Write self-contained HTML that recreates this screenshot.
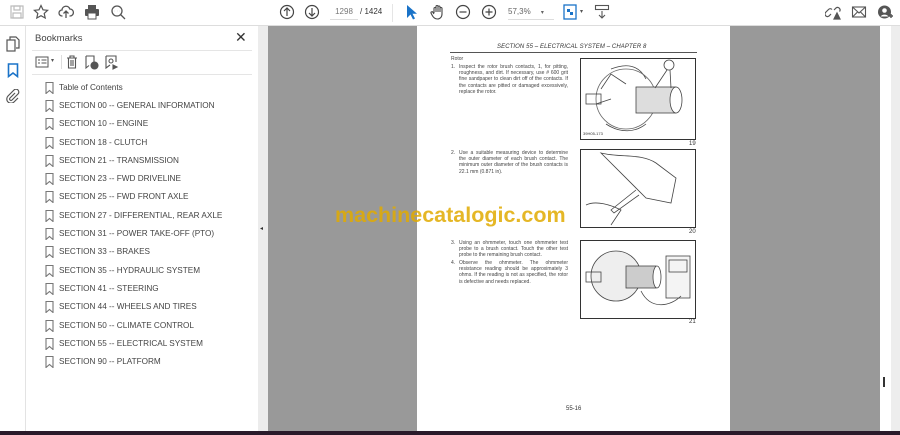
<!DOCTYPE html>
<html><head><meta charset="utf-8"><style>
*{margin:0;padding:0;box-sizing:border-box}
body{width:900px;height:435px;overflow:hidden;background:#fff;font-family:"Liberation Sans",sans-serif;position:relative}
.a{position:absolute}
.tb{left:0;top:0;width:900px;height:26px;background:#fff;border-bottom:1px solid #ddd}
.ic{position:absolute;top:4px}
.bm{position:absolute;left:45px;font-size:8.2px;color:#444;white-space:nowrap}
.bm svg{position:absolute;left:0;top:-1px}
.bm span{position:absolute;left:14px;top:0}
.pt{font-size:5px;color:#444;line-height:6.2px;position:absolute}
.box{position:absolute;border:1px solid #333;background:#fff;left:580px;width:116px}
.fn{position:absolute;font-size:6px;color:#333;left:689px}
</style></head><body>
<div class="a tb">
<svg class="ic" style="left:9px" width="16" height="16" viewBox="0 0 16 16" fill="none" stroke="#bbb" stroke-width="1.2"><rect x="2" y="2" width="12" height="12"/><rect x="5" y="2" width="6" height="4"/><rect x="4" y="9" width="8" height="5"/></svg>
<svg class="ic" style="left:33px" width="16" height="16" viewBox="0 0 16 16" fill="none" stroke="#555" stroke-width="1.2"><path d="M8 1.5l2 4.3 4.6.5-3.4 3.1 1 4.6L8 11.7 3.8 14l1-4.6L1.4 6.3 6 5.8z"/></svg>
<svg class="ic" style="left:58px" width="16" height="16" viewBox="0 0 16 16" fill="none" stroke="#555" stroke-width="1.3"><path d="M4.5 12H4a3 3 0 0 1 0-6 4 4 0 0 1 7.8-1A3 3 0 0 1 12 12h-.5M8 14V7M5.5 9.5 8 7l2.5 2.5"/></svg>
<svg class="ic" style="left:84px" width="16" height="16" viewBox="0 0 16 16" fill="#555"><rect x="4" y="1" width="8" height="4"/><rect x="1" y="5" width="14" height="7" rx="1"/><rect x="4" y="9" width="8" height="6" fill="#fff" stroke="#555"/></svg>
<svg class="ic" style="left:110px" width="16" height="16" viewBox="0 0 16 16" fill="none" stroke="#555" stroke-width="1.3"><circle cx="7" cy="7" r="5"/><path d="M10.5 10.5 15 15M4.5 7h.1M7 7h.1M9.5 7h.1"/></svg>
<svg class="ic" style="left:279px" width="16" height="16" viewBox="0 0 16 16" fill="none" stroke="#444" stroke-width="1.2"><circle cx="8" cy="8" r="6.5"/><path d="M8 12V4.5M5 7l3-3 3 3"/></svg>
<svg class="ic" style="left:304px" width="16" height="16" viewBox="0 0 16 16" fill="none" stroke="#444" stroke-width="1.2"><circle cx="8" cy="8" r="6.5"/><path d="M8 4v7.5M5 9l3 3 3-3"/></svg>
<div class="a" style="left:330px;top:7px;width:28px;font-size:8px;color:#777;border-bottom:1px solid #ddd;padding-bottom:3px;text-align:center">1298</div>
<div class="a" style="left:360px;top:7px;font-size:8px;color:#333">/ 1424</div>
<div class="a" style="left:392px;top:4px;width:1px;height:18px;background:#e5e5e5"></div>
<svg class="ic" style="left:405px" width="12" height="16" viewBox="0 0 12 16"><path d="M2 1v13l3.5-3.5 2.5 5 2-1-2.5-4.8H12z" fill="#1a73c8"/></svg>
<svg class="ic" style="left:430px" width="16" height="16" viewBox="0 0 16 16" fill="none" stroke="#444" stroke-width="1.1"><path d="M4 9V4.5a1 1 0 0 1 2 0V8M6 8V2.5a1 1 0 0 1 2 0V8M8 8V3a1 1 0 0 1 2 0v5M10 8V4.5a1 1 0 0 1 2 0V10c0 3-2 5-4.5 5S3.5 14 2 11l-1-2a1 1 0 0 1 2-.5L4 10"/></svg>
<svg class="ic" style="left:455px" width="16" height="16" viewBox="0 0 16 16" fill="none" stroke="#444" stroke-width="1.2"><circle cx="8" cy="8" r="6.5"/><path d="M4.5 8h7"/></svg>
<svg class="ic" style="left:481px" width="16" height="16" viewBox="0 0 16 16" fill="none" stroke="#444" stroke-width="1.2"><circle cx="8" cy="8" r="6.5"/><path d="M4.5 8h7M8 4.5v7"/></svg>
<div class="a" style="left:508px;top:7px;width:46px;font-size:8px;color:#666;border-bottom:1px solid #ddd;padding-bottom:3px">57,3% <span style="margin-left:8px;font-size:6px">▾</span></div>
<svg class="ic" style="left:563px" width="14" height="16" viewBox="0 0 14 16"><rect x="1" y="1" width="12" height="14" fill="#fff" stroke="#1a73c8" stroke-width="1.3"/><path d="M4 5h3v3H4zM7 8h3v3H7z" fill="#1a73c8"/></svg>
<div class="a" style="left:580px;top:8px;font-size:6px;color:#555">▾</div>
<svg class="ic" style="left:594px" width="16" height="16" viewBox="0 0 16 16" fill="none" stroke="#555" stroke-width="1.1"><rect x="1.5" y="1.5" width="13" height="4"/><path d="M8 7v7M5 11l3 3 3-3"/></svg>
<svg class="ic" style="left:825px" width="16" height="16" viewBox="0 0 16 16" fill="none" stroke="#555" stroke-width="1.2"><path d="M6 10l-2 2a2.5 2.5 0 0 1-3.5-3.5l3-3a2.5 2.5 0 0 1 3.5 0M9 6l2-2a2.5 2.5 0 0 1 3.5 3.5"/><path d="M9 15l3-6 3 6z" fill="#555"/></svg>
<svg class="ic" style="left:851px" width="16" height="16" viewBox="0 0 16 16" fill="none" stroke="#555" stroke-width="1.1"><rect x="1.5" y="3" width="13" height="10"/><path d="M1.5 3 8 9l6.5-6M1.5 13l5-5M14.5 13l-5-5"/></svg>
<svg class="ic" style="left:877px" width="16" height="16" viewBox="0 0 16 16"><circle cx="7.5" cy="8" r="6.5" fill="#555"/><circle cx="7.5" cy="6.5" r="2.3" fill="#fff"/><path d="M3.5 12.5a4.5 3.5 0 0 1 8 0" fill="#fff"/><path d="M12 12h4M14 10v4" stroke="#555" stroke-width="1.4"/></svg>
</div>
<div class="a" style="left:0;top:26px;width:26px;height:405px;background:#fff;border-right:1px solid #e3e3e3"></div>
<svg class="a" style="left:6px;top:36px" width="14" height="16" viewBox="0 0 14 16" fill="none" stroke="#555" stroke-width="1.2"><path d="M4 4V1h6l3 3v8h-3"/><rect x="1" y="4" width="8" height="11"/></svg>
<svg class="a" style="left:7px;top:63px" width="12" height="15" viewBox="0 0 12 15" fill="none" stroke="#1a73c8" stroke-width="1.6"><path d="M1.5 1h9v12.5L6 10l-4.5 3.5z"/></svg>
<svg class="a" style="left:6px;top:89px" width="14" height="14" viewBox="0 0 14 14" fill="none" stroke="#555" stroke-width="1.2"><path d="M9 4l-5 5a1.4 1.4 0 0 0 2 2l6-6a2.8 2.8 0 0 0-4-4L2 7a4.2 4.2 0 0 0 6 6l4-4"/></svg>
<div class="a" style="left:27px;top:26px;width:231px;height:405px;background:#fff"></div>
<div class="a" style="left:35px;top:33px;font-size:9.5px;color:#444">Bookmarks</div>
<div class="a" style="left:235px;top:29px;font-size:14px;color:#333">✕</div>
<div class="a" style="left:32px;top:50px;width:220px;height:1px;background:#e5e5e5"></div>
<svg class="a" style="left:35px;top:56px" width="14" height="12" viewBox="0 0 14 12" fill="none" stroke="#555" stroke-width="1"><rect x="1" y="1" width="12" height="10"/><path d="M3 4h2M3 7h2M6.5 4h5M6.5 7h5"/></svg>
<div class="a" style="left:51px;top:57px;font-size:6px;color:#555">▾</div>
<div class="a" style="left:61px;top:55px;width:1px;height:14px;background:#ddd"></div>
<svg class="a" style="left:66px;top:55px" width="12" height="14" viewBox="0 0 12 14" fill="none" stroke="#555" stroke-width="1.1"><path d="M1 3h10M4 3V1h4v2M2.5 3v10h7V3M5 5v6M7 5v6"/></svg>
<svg class="a" style="left:85px;top:55px" width="14" height="15" viewBox="0 0 14 15" fill="none" stroke="#555" stroke-width="1.1"><path d="M1 1h8v6M1 1v12l3-2.5"/><circle cx="9.5" cy="10.5" r="3.5" fill="#555"/></svg>
<svg class="a" style="left:105px;top:55px" width="14" height="15" viewBox="0 0 14 15" fill="none" stroke="#555" stroke-width="1.1"><path d="M1 1h10v6M1 1v12l4-3"/><circle cx="6" cy="6" r="2"/><path d="M8 10l4 2-4 2z" fill="#555"/></svg>
<div class="a" style="left:32px;top:74px;width:220px;height:1px;background:#e5e5e5"></div>
<div class="bm" style="top:83px"><svg width="9" height="12" viewBox="0 0 9 12" fill="none" stroke="#777" stroke-width="1.1"><path d="M1 .5h7v11L4.5 8.5 1 11.5z"/></svg><span>Table of Contents</span></div>
<div class="bm" style="top:101px"><svg width="9" height="12" viewBox="0 0 9 12" fill="none" stroke="#777" stroke-width="1.1"><path d="M1 .5h7v11L4.5 8.5 1 11.5z"/></svg><span>SECTION 00 -- GENERAL INFORMATION</span></div>
<div class="bm" style="top:119px"><svg width="9" height="12" viewBox="0 0 9 12" fill="none" stroke="#777" stroke-width="1.1"><path d="M1 .5h7v11L4.5 8.5 1 11.5z"/></svg><span>SECTION 10 -- ENGINE</span></div>
<div class="bm" style="top:138px"><svg width="9" height="12" viewBox="0 0 9 12" fill="none" stroke="#777" stroke-width="1.1"><path d="M1 .5h7v11L4.5 8.5 1 11.5z"/></svg><span>SECTION 18 - CLUTCH</span></div>
<div class="bm" style="top:156px"><svg width="9" height="12" viewBox="0 0 9 12" fill="none" stroke="#777" stroke-width="1.1"><path d="M1 .5h7v11L4.5 8.5 1 11.5z"/></svg><span>SECTION 21 -- TRANSMISSION</span></div>
<div class="bm" style="top:174px"><svg width="9" height="12" viewBox="0 0 9 12" fill="none" stroke="#777" stroke-width="1.1"><path d="M1 .5h7v11L4.5 8.5 1 11.5z"/></svg><span>SECTION 23 -- FWD DRIVELINE</span></div>
<div class="bm" style="top:192px"><svg width="9" height="12" viewBox="0 0 9 12" fill="none" stroke="#777" stroke-width="1.1"><path d="M1 .5h7v11L4.5 8.5 1 11.5z"/></svg><span>SECTION 25 -- FWD FRONT AXLE</span></div>
<div class="bm" style="top:211px"><svg width="9" height="12" viewBox="0 0 9 12" fill="none" stroke="#777" stroke-width="1.1"><path d="M1 .5h7v11L4.5 8.5 1 11.5z"/></svg><span>SECTION 27 - DIFFERENTIAL, REAR AXLE</span></div>
<div class="bm" style="top:229px"><svg width="9" height="12" viewBox="0 0 9 12" fill="none" stroke="#777" stroke-width="1.1"><path d="M1 .5h7v11L4.5 8.5 1 11.5z"/></svg><span>SECTION 31 -- POWER TAKE-OFF (PTO)</span></div>
<div class="bm" style="top:247px"><svg width="9" height="12" viewBox="0 0 9 12" fill="none" stroke="#777" stroke-width="1.1"><path d="M1 .5h7v11L4.5 8.5 1 11.5z"/></svg><span>SECTION 33 -- BRAKES</span></div>
<div class="bm" style="top:266px"><svg width="9" height="12" viewBox="0 0 9 12" fill="none" stroke="#777" stroke-width="1.1"><path d="M1 .5h7v11L4.5 8.5 1 11.5z"/></svg><span>SECTION 35 -- HYDRAULIC SYSTEM</span></div>
<div class="bm" style="top:284px"><svg width="9" height="12" viewBox="0 0 9 12" fill="none" stroke="#777" stroke-width="1.1"><path d="M1 .5h7v11L4.5 8.5 1 11.5z"/></svg><span>SECTION 41 -- STEERING</span></div>
<div class="bm" style="top:302px"><svg width="9" height="12" viewBox="0 0 9 12" fill="none" stroke="#777" stroke-width="1.1"><path d="M1 .5h7v11L4.5 8.5 1 11.5z"/></svg><span>SECTION 44 -- WHEELS AND TIRES</span></div>
<div class="bm" style="top:321px"><svg width="9" height="12" viewBox="0 0 9 12" fill="none" stroke="#777" stroke-width="1.1"><path d="M1 .5h7v11L4.5 8.5 1 11.5z"/></svg><span>SECTION 50 -- CLIMATE CONTROL</span></div>
<div class="bm" style="top:339px"><svg width="9" height="12" viewBox="0 0 9 12" fill="none" stroke="#777" stroke-width="1.1"><path d="M1 .5h7v11L4.5 8.5 1 11.5z"/></svg><span>SECTION 55 -- ELECTRICAL SYSTEM</span></div>
<div class="bm" style="top:357px"><svg width="9" height="12" viewBox="0 0 9 12" fill="none" stroke="#777" stroke-width="1.1"><path d="M1 .5h7v11L4.5 8.5 1 11.5z"/></svg><span>SECTION 90 -- PLATFORM</span></div>
<div class="a" style="left:258px;top:26px;width:10px;height:405px;background:#ececec"></div>
<div class="a" style="left:260px;top:225px;font-size:6px;color:#333">◂</div>
<div class="a" style="left:268px;top:26px;width:612px;height:405px;background:#999"></div>
<div class="a" style="left:880px;top:26px;width:11px;height:405px;background:#fff"></div>
<div class="a" style="left:891px;top:26px;width:9px;height:405px;background:#ededed"></div>
<div class="a" style="left:883px;top:377px;width:2px;height:10px;background:#333"></div>
<div class="a" style="left:0;top:431px;width:900px;height:4px;background:#2a1a2a"></div>
<div class="a" style="left:417px;top:26px;width:313px;height:405px;background:#fff"></div>
<div class="a" style="left:497px;top:44px;font-size:6px;font-style:italic;color:#333;letter-spacing:.1px">SECTION 55 – ELECTRICAL SYSTEM – CHAPTER 8</div>
<div class="a" style="left:450px;top:52px;width:247px;height:1px;background:#555"></div>
<div class="pt" style="left:451px;top:56px">Rotor</div>
<div class="pt" style="left:451px;top:64px">1.</div>
<div class="pt" style="left:459px;top:64px;width:109px;text-align:justify">Inspect the rotor brush contacts, 1, for pitting, roughness, and dirt. If necessary, use # 600 grit fine sandpaper to clean dirt off of the contacts. If the contacts are pitted or damaged excessively, replace the rotor.</div>
<div class="pt" style="left:451px;top:150px">2.</div>
<div class="pt" style="left:459px;top:150px;width:109px;text-align:justify">Use a suitable measuring device to determine the outer diameter of each brush contact. The minimum outer diameter of the brush contacts is 22.1 mm (0.871 in).</div>
<div class="pt" style="left:451px;top:240px">3.</div>
<div class="pt" style="left:459px;top:240px;width:109px;text-align:justify">Using an ohmmeter, touch one ohmmeter test probe to a brush contact. Touch the other test probe to the remaining brush contact.</div>
<div class="pt" style="left:451px;top:260px">4.</div>
<div class="pt" style="left:459px;top:260px;width:109px;text-align:justify">Observe the ohmmeter. The ohmmeter resistance reading should be approximately 3 ohms. If the reading is not as specified, the rotor is defective and needs replaced.</div>
<div class="box" style="top:58px;height:82px"><svg width="114" height="80" viewBox="0 0 114 80" fill="none" stroke="#444" stroke-width=".8"><path d="M30 10 C50 2 60 10 65 20 M20 30 l10 -15 l15 10 M15 45 l15 -5 M25 65 c15 10 30 8 40 0"/><ellipse cx="45" cy="40" rx="30" ry="30" stroke="#666"/><rect x="55" y="28" width="40" height="26" fill="#ddd"/><ellipse cx="95" cy="41" rx="6" ry="13" fill="#fff"/><rect x="5" y="35" width="15" height="10"/><circle cx="88" cy="6" r="5"/><path d="M86 11l-12 18M89 11l1 18"/></svg><div style="position:absolute;left:2px;top:72px;font-size:4px;color:#333">39H05-173</div></div>
<div class="fn" style="top:141px">19</div>
<div class="box" style="top:149px;height:79px"><svg width="114" height="77" viewBox="0 0 114 77" fill="none" stroke="#444" stroke-width=".8"><path d="M20 3 c20 5 40 0 55 10 l20 15 l-5 25 l-25 -5 z M55 40 L30 60 l3 3 l25 -18 M5 55 c10 -5 25 0 35 5 l-10 15"/></svg></div>
<div class="fn" style="top:229px">20</div>
<div class="box" style="top:240px;height:79px"><svg width="114" height="77" viewBox="0 0 114 77" fill="none" stroke="#444" stroke-width=".8"><ellipse cx="35" cy="35" rx="25" ry="25" fill="#eee"/><rect x="45" y="25" width="30" height="22" fill="#ccc"/><ellipse cx="76" cy="36" rx="4" ry="11" fill="#fff"/><rect x="5" y="31" width="15" height="10"/><rect x="85" y="15" width="24" height="42" fill="#f4f4f4"/><rect x="88" y="19" width="18" height="12"/><path d="M60 50 c10 20 30 15 40 5"/></svg></div>
<div class="fn" style="top:319px">21</div>
<div class="a" style="left:566px;top:406px;font-size:6px;color:#333">55-16</div>
<div class="a" style="left:335px;top:203px;font-size:21.5px;font-weight:bold;color:rgba(225,170,0,0.85)">machinecatalogic.com</div>
</body></html>
